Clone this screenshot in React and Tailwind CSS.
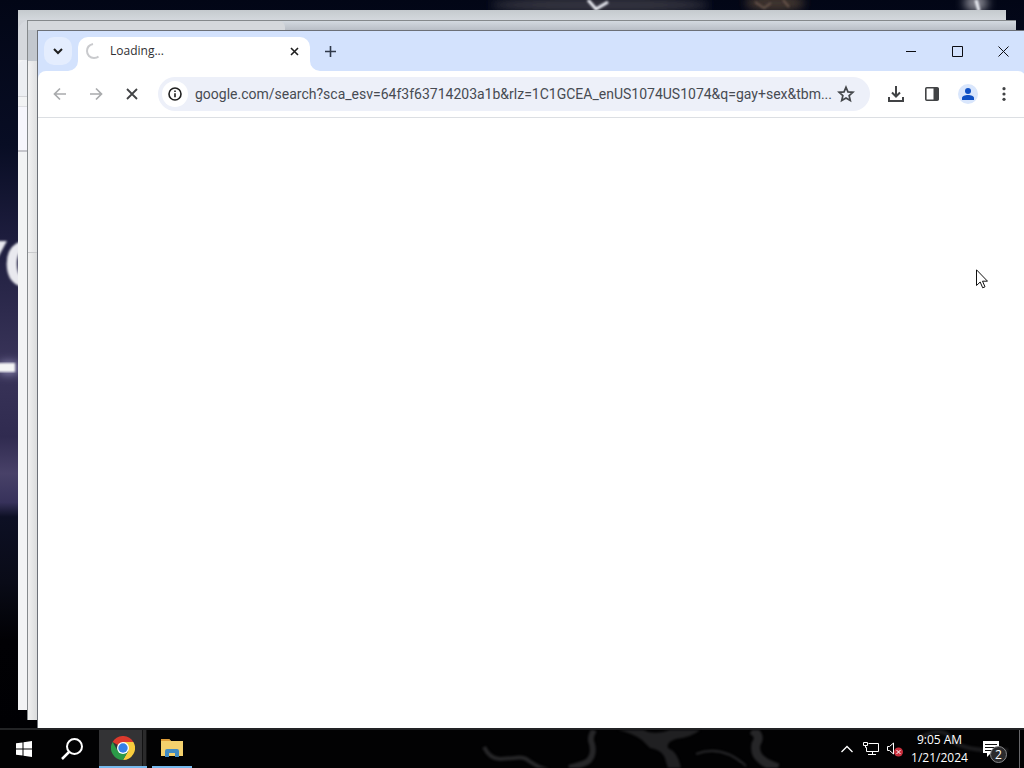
const captionButtons = [
  { id: "minimize", label: "Minimize", path: "M0 5.5h10" },
  { id: "maximize", label: "Maximize", path: "M.5 .5h10v10h-10z" },
  { id: "close", label: "Close", path: "M.5 .5l10 10M10.5 .5l-10 10" },
];

function Wallpaper() {
  return (
    <svg className="absolute top-0 left-0 h-[728px] w-[1024px]" viewBox="0 0 1024 728">
      <defs>
        <linearGradient id="night" x1="0" y1="0" x2="0" y2="1">
          <stop offset="0" stopColor="#020616" />
          <stop offset="0.2" stopColor="#080d24" />
          <stop offset="0.32" stopColor="#1c1c3c" />
          <stop offset="0.5" stopColor="#393459" />
          <stop offset="0.6" stopColor="#302b50" />
          <stop offset="0.65" stopColor="#484168" />
          <stop offset="0.69" stopColor="#37325b" />
          <stop offset="0.71" stopColor="#0d1024" />
          <stop offset="0.8" stopColor="#090b17" />
          <stop offset="0.88" stopColor="#010104" />
          <stop offset="1" stopColor="#000003" />
        </linearGradient>
        <filter id="soft">
          <feGaussianBlur stdDeviation="1" />
        </filter>
        <filter id="haze" x="-50%" y="-50%" width="200%" height="200%">
          <feGaussianBlur stdDeviation="5" />
        </filter>
      </defs>
      <rect width="1024" height="728" fill="url(#night)" />
      <g filter="url(#haze)">
        <ellipse cx="600" cy="5" rx="110" ry="8" fill="#363540" />
        <ellipse cx="775" cy="3" rx="30" ry="9" fill="#41342f" />
        <ellipse cx="976" cy="3" rx="12" ry="9" fill="#85858f" />
        <rect x="0" y="362" width="18" height="12" fill="#8b86b0" />
      </g>
      <g filter="url(#soft)" stroke="#eceef5" fill="none">
        <path d="M588 0l8 9 12-7" strokeWidth="3" />
        <path d="M976 0l3 11" strokeWidth="3" />
        <path d="M755 2l9 6 7-5M783 0l6 7" stroke="#67544b" strokeWidth="2" />
      </g>
      <text x="-33 3" y="287" className="font-['Open_Sans',sans-serif] text-[64px] font-bold" fill="#e9e9ef" filter="url(#soft)">
        YO
      </text>
      <rect x="-4" y="363" width="19" height="9" fill="#f4f4f6" filter="url(#soft)" />
    </svg>
  );
}

function BackWindows() {
  return (
    <>
      <div className="absolute top-[10px] right-[18px] bottom-[18px] left-[18px] bg-[#f2f3f4]">
        <div className="h-[10px] bg-linear-to-b from-[#c5cace] to-[#d4d8dd]" />
        <div className="h-10 w-5 bg-linear-to-b from-[#d0d3d8] to-[#c3c8d0]">
          <div className="h-full w-full rounded-tl-xl bg-[#d5d8dd]" />
        </div>
        <div className="h-[37px] w-5 rounded-tl-lg border-b border-[#d3d4d8] bg-[#eceef2]" />
        <div className="h-[10px] w-5 border-b border-[#dedfe3]" />
        <div className="h-[45px] w-5 border-b-2 border-[#c5c5cb] bg-[#f6f6fc]" />
      </div>
      <div className="absolute top-[20px] right-2 bottom-2 left-[27px] border-t border-l border-[#85898c] bg-linear-to-r from-[#f0f0f0] from-0% to-[#d8d9da] to-[10px]">
        <div className="h-[9px] bg-linear-to-b from-[#d3d9e0] to-[#b9bec6]">
          <div className="h-full w-[257px] rounded-tr-md bg-[#d5d8dc]" />
        </div>
        <div className="h-[31px] w-[10px] bg-[#c2c7ce]" />
        <div className="h-[192px] w-[10px] rounded-tl-lg border-b border-[#c9cacc] bg-linear-to-r from-[#f2f2f3] to-[#dcddde]" />
      </div>
    </>
  );
}

function TabStrip() {
  return (
    <div className="flex h-10 items-end bg-[#d3e2fd]">
      <div className="flex h-10 w-10 items-center justify-center">
        <button aria-label="Search tabs" className="flex h-7 w-7 items-center justify-center rounded-[10px] bg-[#e4edfe]">
          <svg className="h-3 w-3" viewBox="0 0 12 12" fill="none" stroke="#1f1f1f" strokeWidth="2">
            <path d="M2 4l4 4 4-4" />
          </svg>
        </button>
      </div>
      <div className="relative flex h-[34px] w-[232px] items-center rounded-t-[10px] bg-white pr-[10px] pb-[6px] pl-2">
        <svg className="absolute bottom-0 -left-[10px] h-[10px] w-[10px]" viewBox="0 0 10 10" fill="#fff">
          <path d="M10 0v10H0A10 10 0 0 0 10 0z" />
        </svg>
        <svg className="absolute -right-[10px] bottom-0 h-[10px] w-[10px]" viewBox="0 0 10 10" fill="#fff">
          <path d="M0 0v10h10A10 10 0 0 1 0 0z" />
        </svg>
        <svg className="h-4 w-4" viewBox="0 0 16 16" fill="none" stroke="#c9cacd" strokeWidth="2">
          <path d="M7 1C3 2 1 4.500 1 8c0 4 3 7 7 7 2 0 3.500-.5 4.500-1.500" />
        </svg>
        <span className="ml-2 flex-1 text-xs text-[#2f3033]">Loading...</span>
        <button aria-label="Close tab" className="flex h-3 w-3 items-center justify-center">
          <svg className="h-[9px] w-[9px]" viewBox="0 0 9 9" stroke="#1f1f1f" strokeWidth="1.600">
            <path d="M1 1l7 7M8 1l-7 7" />
          </svg>
        </button>
      </div>
      <button aria-label="New tab" className="flex h-10 w-10 items-center justify-center">
        <svg className="h-[11px] w-[11px]" viewBox="0 0 11 11" stroke="#30394a" strokeWidth="1.600">
          <path d="M5.500 0v11M0 5.500h11" />
        </svg>
      </button>
      <div className="ml-auto flex h-10">
        {captionButtons.map((button) => (
          <button key={button.id} aria-label={button.label} className="flex w-[46px] items-center justify-center">
            <svg className="h-[11px] w-[11px]" viewBox="0 0 11 11" fill="none" stroke="#0c0d12">
              <path d={button.path} />
            </svg>
          </button>
        ))}
      </div>
    </div>
  );
}

function ToolButton({ label, children }) {
  return (
    <button aria-label={label} className="flex h-9 w-9 shrink-0 items-center justify-center">
      {children}
    </button>
  );
}

function Toolbar() {
  return (
    <div className="bg-[#d3e2fd]">
      <div className="flex h-[47px] items-center rounded-t-lg border-b border-[#dcdfe3] bg-white px-1">
        <ToolButton label="Back">
          <svg className="h-[14px] w-[14px]" viewBox="0 0 14 14" fill="none" stroke="#a9abad" strokeWidth="1.700">
            <path d="M13 7H2M7 1.500L1.500 7 7 12.500" />
          </svg>
        </ToolButton>
        <ToolButton label="Forward">
          <svg className="h-[14px] w-[14px]" viewBox="0 0 14 14" fill="none" stroke="#a9abad" strokeWidth="1.700">
            <path d="M1 7h11M7 1.500L12.500 7 7 12.500" />
          </svg>
        </ToolButton>
        <ToolButton label="Stop">
          <svg className="h-3 w-3" viewBox="0 0 12 12" stroke="#414345" strokeWidth="1.800">
            <path d="M1 1l10 10M11 1L1 11" />
          </svg>
        </ToolButton>
        <div className="mx-2 flex h-[34px] min-w-0 flex-1 items-center rounded-full bg-[#edf0f9] pr-[14px] pl-1">
          <button aria-label="Site information" className="flex h-[26px] w-[26px] shrink-0 items-center justify-center rounded-full bg-white">
            <svg className="h-[14px] w-[14px]" viewBox="0 0 14 14" fill="none" stroke="#1f1f1f" strokeWidth="1.600">
              <circle cx="7" cy="7" r="6" />
              <path d="M7 6.300v4M7 3.500v1.600" />
            </svg>
          </button>
          <input
            aria-label="Address"
            className="ml-[7px] min-w-0 flex-1 bg-transparent font-[Roboto,sans-serif] text-sm text-[#474b52] outline-none"
            defaultValue="google.com/search?sca_esv=64f3f63714203a1b&rlz=1C1GCEA_enUS1074US1074&q=gay+sex&tbm..."
          />
          <button aria-label="Bookmark this tab" className="shrink-0">
            <svg className="h-[18px] w-5" viewBox="0 0 24 24" fill="none" stroke="#44474b" strokeWidth="2.300">
              <path d="M12 3l2.600 6.100 6.600.6-5 4.400 1.500 6.500L12 17.200l-5.700 3.400 1.500-6.500-5-4.400 6.600-.6z" />
            </svg>
          </button>
        </div>
        <ToolButton label="Downloads">
          <svg className="h-4 w-4" viewBox="0 0 16 16" fill="none" stroke="#414345" strokeWidth="2">
            <path d="M8 0v10M4 6.500l4 4 4-4M1 11v4h14v-4" />
          </svg>
        </ToolButton>
        <ToolButton label="Side panel">
          <svg className="h-[14px] w-[14px]" viewBox="0 0 14 14">
            <rect x="0.800" y="0.800" width="12.400" height="12.400" rx="1" fill="none" stroke="#414345" strokeWidth="1.600" />
            <path d="M8.500 1h5v12h-5z" fill="#414345" />
          </svg>
        </ToolButton>
        <ToolButton label="Profile">
          <svg className="h-5 w-5" viewBox="0 0 20 20" fill="#0f50c4">
            <circle cx="10" cy="10" r="10" fill="#d9e6fc" />
            <circle cx="10" cy="7" r="3" />
            <path d="M4 16v-2c0-2 3-3 6-3s6 1 6 3v2z" />
          </svg>
        </ToolButton>
        <ToolButton label="Menu">
          <svg className="h-4 w-4" viewBox="0 0 16 16" fill="#414345">
            <circle cx="8" cy="2.700" r="1.600" />
            <circle cx="8" cy="8" r="1.600" />
            <circle cx="8" cy="13.300" r="1.600" />
          </svg>
        </ToolButton>
      </div>
    </div>
  );
}

function ChromeLogo() {
  return (
    <svg className="h-6 w-6" viewBox="0 0 24 24">
      <path d="M12 12L1.600 6A12 12 0 0 1 22.400 6z" fill="#dc3a2d" />
      <path d="M12 6h10.400A12 12 0 0 1 12 24l5.200-9z" fill="#f8cc3d" />
      <path d="M1.600 6A12 12 0 0 0 12 24l5.200-9L12 12 6.800 15z" fill="#2b9a48" />
      <circle cx="12" cy="12" r="6" fill="#fff" />
      <circle cx="12" cy="12" r="4.700" fill="#3580e6" />
    </svg>
  );
}

function Taskbar() {
  return (
    <footer className="relative flex h-10 shrink-0 items-stretch border-t-2 border-[#222325] bg-[#020203] text-white">
      <svg
        className="absolute top-0 left-[480px] h-[38px] w-[544px] blur-[1px]"
        viewBox="0 0 544 38"
        fill="none"
        stroke="#262628"
        strokeLinejoin="round"
      >
        <path d="M4 17q6 12 16 12l14-1q10-2 15 3 8 6 20 9" strokeWidth="4" />
        <path d="M114 0q-5 8-2 14 3 12-5 18-6 3-18 6" strokeWidth="6" />
        <path d="M138 0q14 3 24 10l8 8q14 2 16 14l2 6h13q-3-16-13-20-2-6 8-9 16-2 24-9h-30q-10 4-22 2-8-4-12-2z" fill="#202022" stroke="none" />
        <path d="M216 24q26-10 50 12" strokeWidth="2" />
        <path d="M272 0q10 6 4 14-2 10 6 16 4 4 16 8" strokeWidth="9" />
        <path d="M440 8q24-14 34 4 14 10 54 8" strokeWidth="4" stroke="#1b1b1d" />
      </svg>
      <button aria-label="Start" className="flex w-12 items-center justify-center">
        <svg className="h-4 w-4" viewBox="0 0 16 16" fill="#fff">
          <path d="M0 2.300L6.500 1.400v6.100H0zM7.500 1.200L16 0v7.500H7.500zM0 8.500h6.500v6.100L0 13.700zM7.500 8.500H16V16l-8.500-1.200z" />
        </svg>
      </button>
      <button aria-label="Search" className="flex w-12 items-center justify-center">
        <svg className="h-[22px] w-[22px]" viewBox="0 0 22 22" fill="none" stroke="#fff" strokeWidth="2">
          <circle cx="13.500" cy="8.500" r="7.500" />
          <path d="M8 14l-7 7" strokeWidth="2.500" />
        </svg>
      </button>
      <button aria-label="Google Chrome" className="relative ml-[3px] flex w-12 items-center justify-center border-b-2 border-[#76b9ed] bg-[#333335]">
        <span className="absolute inset-y-0 right-0 w-[5px] border-x border-[#111112] bg-[#2a2a2b]" />
        <ChromeLogo />
      </button>
      <button aria-label="File Explorer" className="ml-[5px] flex w-10 items-center justify-center border-b-2 border-[#76b9ed]">
        <svg className="h-5 w-[22px]" viewBox="0 0 22 20">
          <path d="M0 1h8l2 2h12v15H0z" fill="#f4d16d" />
          <path d="M0 1h8l2 2H0z" fill="#dd9c38" />
          <path d="M4 18v-5q0-2 2-2h10q2 0 2 2v6h-4v-4H8v4H4z" fill="#418bc3" />
        </svg>
      </button>
      <div className="relative ml-auto flex items-center">
        <button aria-label="Show hidden icons" className="flex w-6 justify-center">
          <svg className="h-2 w-3" viewBox="0 0 12 8" fill="none" stroke="#fff" strokeWidth="1.300">
            <path d="M.5 7L6 1.500 11.500 7" />
          </svg>
        </button>
        <button aria-label="Network" className="flex w-6 justify-center">
          <svg className="h-[14px] w-4" viewBox="0 0 16 14" fill="none" stroke="#fff">
            <path d="M5.500 1.500h10v8H3.500v-4M9.500 9.500v3M5 12.500h8M.5 .5h4v3h-4zM2.500 3.500v2h1" />
          </svg>
        </button>
        <button aria-label="Volume muted" className="flex w-6 justify-center">
          <svg className="h-4 w-4" viewBox="0 0 16 16" fill="none" stroke="#fff">
            <path d="M.5 5.500h2l4-3.500v11l-4-3.500h-2z" />
            <circle cx="11.500" cy="11" r="4.500" fill="#c9303e" stroke="none" />
            <path d="M9.500 9l4 4M13.500 9l-4 4" />
          </svg>
        </button>
        <div className="flex w-[65px] flex-col items-center text-xs leading-[18px]">
          <span>9:05 AM</span>
          <span>1/21/2024</span>
        </div>
        <button aria-label="2 notifications" className="relative flex h-full w-[47px] items-center pl-[11px]">
          <svg className="h-4 w-4" viewBox="0 0 16 16">
            <path d="M0 0h16v12H8l-4 4v-4H0z" fill="#fff" />
            <path d="M2 3.500h12M2 6.500h12M2 9.500h8" stroke="#111" />
          </svg>
          <span className="absolute top-4 left-[18px] flex h-[17px] w-[17px] items-center justify-center rounded-full border border-[#88888a] bg-[#2b2b2d] text-xs leading-none">
            2
          </span>
        </button>
        <button aria-label="Show desktop" className="h-full w-[5px] border-l border-[#67676a]" />
      </div>
    </footer>
  );
}

function App() {
  return (
    <div className="flex h-screen flex-col overflow-hidden bg-black font-['Open_Sans','Noto_Sans',sans-serif]">
      <main className="relative min-h-0 flex-1 overflow-hidden">
        <Wallpaper />
        <BackWindows />
        <section className="absolute top-[30px] -right-[2px] -bottom-[2px] left-[37px] flex flex-col border-t border-l border-[#6c7077] bg-white">
          <TabStrip />
          <Toolbar />
          <div className="flex-1 bg-white" />
        </section>
        <svg className="absolute top-[269px] left-[976px] h-5 w-3" viewBox="0 0 12 20" fill="#fff" stroke="#111">
          <path d="M.5 .8v15.700l3.700-3.500 2.500 5.800 2.300-1-2.500-5.600h5z" />
        </svg>
      </main>
      <Taskbar />
    </div>
  );
}

export default App;
